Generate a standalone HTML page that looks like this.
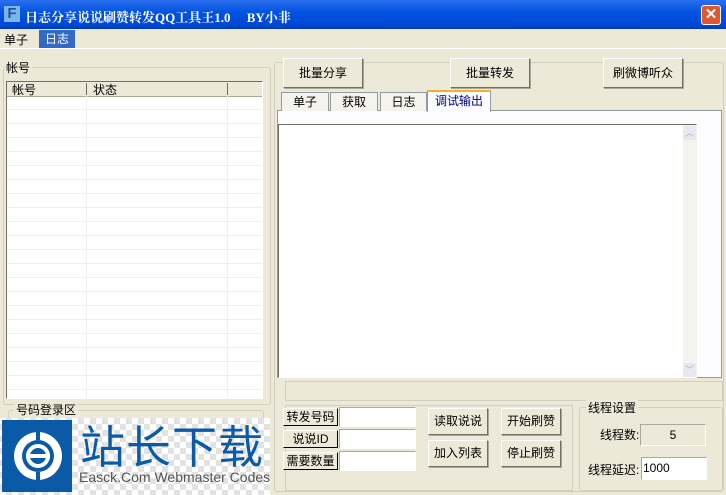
<html><head><style>
body{margin:0;width:726px;height:495px;overflow:hidden;background:#ece9d8;font-family:"Liberation Sans","Noto Sans CJK SC",sans-serif;font-size:12px;position:relative}
.a{position:absolute}
.btn{position:absolute;background:#ece9d8;border:1px solid;border-color:#fff #716f64 #716f64 #fff;box-shadow:1px 1px 0 #aca899;text-align:center;box-sizing:border-box}
.grp{position:absolute;border:1px solid #d0d0bf;border-radius:3px;box-sizing:border-box}
.lg{position:absolute;background:#ece9d8;padding:0 2px}
.inp{position:absolute;background:#fff;border:1px solid;border-color:#aca899 #fff #fff #aca899;box-sizing:border-box}
.lbl{position:absolute;border:1px solid #000;border-top-color:#fff;border-left-color:#fff;box-sizing:border-box;text-align:center;background:#ece9d8;line-height:16px}
.tab{position:absolute;top:92px;height:19px;border:1px solid #919b9c;border-bottom:none;background:#f4f3ee;text-align:center;line-height:18px;box-sizing:border-box}
</style></head><body>
<div class="a" style="left:0;top:0;width:726px;height:29px;background:linear-gradient(#2a6ff0,#0454e0 40%,#0048d8 85%,#003cb0)"></div>
<div class="a" style="left:4px;top:6px;width:16px;height:16px;background:#7ab6e8;color:#1d54a8;font-weight:bold;font-size:15px;line-height:16px;text-align:center">F</div>
<div class="a" style="left:25px;top:7px;color:#fff;font-weight:bold;font-size:13px;font-family:'Liberation Serif','Noto Serif CJK SC',serif;white-space:pre">日志分享说说刷赞转发QQ工具王1.0     BY小非</div>
<div class="a" style="left:701px;top:5px;width:20px;height:20px;background:#e0562e;border:1px solid #fff;border-radius:3px;box-sizing:border-box;color:#fff;text-align:center;font-weight:bold;line-height:18px;font-size:15px">✕</div>
<div class="a" style="left:4px;top:31px">单子</div>
<div class="a" style="left:39px;top:30px;width:36px;height:18px;background:#316ac5;color:#fff;text-align:center;line-height:18px">日志</div>
<div class="a" style="left:0;top:48px;width:726px;height:1px;background:#fff"></div>

<div class="grp" style="left:3px;top:67px;width:268px;height:338px"></div>
<div class="lg" style="left:4px;top:59px">帐号</div>
<div class="a" style="left:6px;top:81px;width:257px;height:318px;background:#fff;border:1px solid;border-color:#716f64 #fff #fff #716f64;box-sizing:border-box;
background-image:linear-gradient(#f0efe8 1px,transparent 1px);background-size:100% 14px;background-position:0 13px"></div>
<div class="a" style="left:7px;top:82px;width:255px;height:14px;background:#ece9d8;border-bottom:1px solid #aca899"></div>
<div class="a" style="left:86px;top:82px;width:1px;height:316px;background:#f0efe8"></div>
<div class="a" style="left:227px;top:82px;width:1px;height:316px;background:#f0efe8"></div>
<div class="a" style="left:86px;top:83px;width:1px;height:12px;background:#716f64"></div>
<div class="a" style="left:227px;top:83px;width:1px;height:12px;background:#716f64"></div>
<div class="a" style="left:12px;top:81px">帐号</div>
<div class="a" style="left:93px;top:81px">状态</div>
<div class="grp" style="left:8px;top:410px;width:256px;height:80px"></div>
<div class="lg" style="left:14px;top:401px">号码登录区</div>

<div class="grp" style="left:274px;top:62px;width:450px;height:430px"></div>
<div class="btn" style="left:283px;top:58px;width:80px;height:30px;line-height:28px">批量分享</div>
<div class="btn" style="left:450px;top:58px;width:80px;height:30px;line-height:28px">批量转发</div>
<div class="btn" style="left:603px;top:58px;width:80px;height:30px;line-height:28px">刷微博听众</div>
<div class="a" style="left:277px;top:110px;width:445px;height:268px;border:1px solid #919b9c;box-sizing:border-box;background:#fcfcfe"></div>
<div class="tab" style="left:281px;width:48px">单子</div>
<div class="tab" style="left:330px;width:48px">获取</div>
<div class="tab" style="left:380px;width:47px">日志</div>
<div class="tab" style="left:427px;top:90px;height:22px;width:64px;background:#fcfcfe;color:#000080;border-top:2px solid #f0b030">调试输出</div>
<div class="a" style="left:278px;top:124px;width:419px;height:254px;background:#fff;border:1px solid;border-color:#716f64 #fff #fff #716f64;box-sizing:border-box"></div>
<div class="a" style="left:683px;top:125px;width:14px;height:252px;background:#f4f3ee"></div>
<div class="a" style="left:683px;top:126px;width:13px;height:14px;background:#e8e8f0;color:#b0b0c0;font-size:9px;text-align:center;line-height:14px">︿</div>
<div class="a" style="left:683px;top:363px;width:13px;height:14px;background:#e8e8f0;color:#b0b0c0;font-size:9px;text-align:center;line-height:14px">﹀</div>

<div class="grp" style="left:285px;top:381px;width:438px;height:20px;border-radius:0"></div>
<div class="grp" style="left:285px;top:405px;width:288px;height:86px;border-radius:0"></div>
<div class="lbl" style="left:283px;top:408px;width:55px;height:18px">转发号码</div>
<div class="lbl" style="left:283px;top:430px;width:55px;height:18px">说说ID</div>
<div class="lbl" style="left:283px;top:452px;width:55px;height:18px">需要数量</div>
<div class="inp" style="left:339px;top:407px;width:77px;height:20px"></div>
<div class="inp" style="left:339px;top:429px;width:77px;height:20px"></div>
<div class="inp" style="left:339px;top:451px;width:77px;height:20px"></div>
<div class="btn" style="left:428px;top:408px;width:60px;height:27px;line-height:25px">读取说说</div>
<div class="btn" style="left:428px;top:440px;width:60px;height:27px;line-height:25px">加入列表</div>
<div class="btn" style="left:501px;top:408px;width:60px;height:27px;line-height:25px">开始刷赞</div>
<div class="btn" style="left:501px;top:440px;width:60px;height:27px;line-height:25px">停止刷赞</div>
<div class="grp" style="left:579px;top:407px;width:144px;height:84px"></div>
<div class="lg" style="left:586px;top:399px">线程设置</div>
<div class="a" style="left:600px;top:426px">线程数:</div>
<div class="a" style="left:640px;top:424px;width:66px;height:22px;border:1px solid;border-color:#aca899 #fff #fff #aca899;box-sizing:border-box;text-align:center;line-height:20px">5</div>
<div class="a" style="left:588px;top:461px">线程延迟:</div>
<div class="inp" style="left:641px;top:457px;width:66px;height:23px;line-height:21px;padding-left:1px">1000</div>

<div class="a" style="left:0;top:418px;width:270px;height:77px;background-color:#fff;background-image:linear-gradient(45deg,#e2e2e2 25%,transparent 25%,transparent 75%,#e2e2e2 75%),linear-gradient(45deg,#e2e2e2 25%,transparent 25%,transparent 75%,#e2e2e2 75%);background-size:12px 12px;background-position:0 0,6px 6px"></div>
<div class="a" style="left:2px;top:420px;width:70px;height:72px;background:#0a5aa8"></div>
<svg class="a" style="left:10px;top:428px" width="56" height="56" viewBox="0 0 56 56"><circle cx="28" cy="28" r="24" fill="#fff"/><circle cx="28" cy="28" r="16" fill="#0a5aa8"/><circle cx="28" cy="28" r="10" fill="none" stroke="#fff" stroke-width="4"/><rect x="16" y="26" width="24" height="4" fill="#fff"/><rect x="26" y="4" width="4" height="8" fill="#0a5aa8"/><rect x="26" y="44" width="4" height="8" fill="#0a5aa8"/></svg>
<div class="a" style="left:80px;top:417px;color:#0a5aa8;font-size:45px;line-height:54px;letter-spacing:1px;font-family:'Noto Sans CJK SC',sans-serif">站长下载</div>
<div class="a" style="left:79px;top:469px;color:#555;font-size:14px">Easck.Com Webmaster Codes</div>
</body></html>
